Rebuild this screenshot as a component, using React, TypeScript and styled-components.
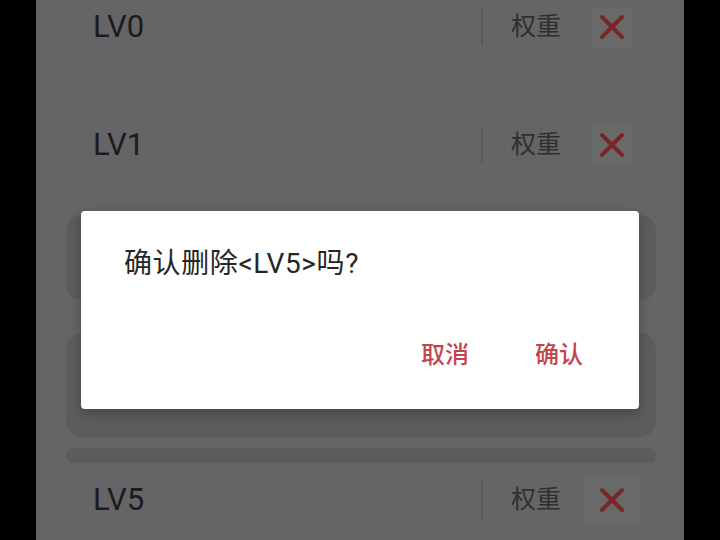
import React from "react";
import styled, { createGlobalStyle } from "styled-components";

const GlobalStyle = createGlobalStyle`
  html, body {
    margin: 0;
    padding: 0;
    background: #000;
  }
  body {
    font-family: Roboto, "Noto Sans CJK SC", "Noto Sans", sans-serif;
  }
`;

const Screen = styled.div`
  position: relative;
  width: 648px;
  height: 540px;
  margin: 0 auto;
  background: #656467;
  overflow: hidden;
`;

const List = styled.div`
  display: flex;
  flex-direction: column;
`;

const Row = styled.div<{ $top: number }>`
  display: flex;
  align-items: center;
  height: 54px;
  margin-top: ${(p) => p.$top}px;
  padding-left: 57px;
`;

const Label = styled.div`
  flex: 1;
  font-size: 31px;
  line-height: 54px;
  color: #1c1c1c;
`;

const Divider = styled.div<{ $h: number }>`
  width: 2px;
  height: ${(p) => p.$h}px;
  background: #5a5a5a;
`;

const Weight = styled.div`
  margin-left: 28px;
  margin-bottom: 1px;
  font-size: 25px;
  line-height: 30px;
  color: #2f2f2f;
  width: 70px;
`;

const XSlot = styled.div`
  width: 58px;
  margin-left: 2px;
  margin-right: 43px;
  display: flex;
  justify-content: center;
  align-items: center;
`;

const XButton = styled.div<{ $w: number; $h: number }>`
  width: ${(p) => p.$w}px;
  height: ${(p) => p.$h}px;
  background: #686a67;
  display: flex;
  align-items: center;
  justify-content: center;
`;

const Ghost = styled.div<{ $top: number; $h: number }>`
  margin-top: ${(p) => p.$top}px;
  margin-left: 30px;
  width: 590px;
  height: ${(p) => p.$h}px;
  background: #5c5d5a;
  border-radius: 16px;
`;

const Dialog = styled.div`
  position: absolute;
  left: 45px;
  top: 211px;
  width: 558px;
  height: 198px;
  box-sizing: border-box;
  background: #fff;
  border-radius: 4px;
  box-shadow: 0 4px 12px rgba(0, 0, 0, 0.25);
  display: flex;
  flex-direction: column;
  padding: 36px 56px 38px 43px;
`;

const Message = styled.div`
  font-size: 28px;
  line-height: 34px;
  letter-spacing: 0.6px;
  color: #262626;
`;

const Actions = styled.div`
  margin-top: auto;
  display: flex;
  justify-content: flex-end;
  gap: 66px;
`;

const ActionButton = styled.div`
  font-size: 24px;
  line-height: 32px;
  font-weight: 500;
  color: #c2454d;
`;

const CloseIcon = () => (
  <svg width="26" height="26" viewBox="0 0 26 26">
    <path
      d="M3 3 L23 23 M23 3 L3 23"
      stroke="#7a2529"
      strokeWidth="4"
      strokeLinecap="round"
    />
  </svg>
);

type ItemProps = { label: string; top: number; bw: number; bh: number; dh: number };

const Item = ({ label, top, bw, bh, dh }: ItemProps) => (
  <Row $top={top}>
    <Label>{label}</Label>
    <Divider $h={dh} />
    <Weight>权重</Weight>
    <XSlot>
      <XButton $w={bw} $h={bh}>
        <CloseIcon />
      </XButton>
    </XSlot>
  </Row>
);

export default function App() {
  return (
    <>
      <GlobalStyle />
      <Screen>
        <List>
          <Item label="LV0" top={0} bw={40} bh={40} dh={36} />
          <Item label="LV1" top={64} bw={40} bh={40} dh={36} />
          <Ghost $top={43} $h={85} />
          <Ghost $top={33} $h={104} />
          <Ghost $top={11} $h={15} />
          <Item label="LV5" top={10} bw={57} bh={52} dh={38} />
        </List>
        <Dialog>
          <Message>确认删除&lt;LV5&gt;吗?</Message>
          <Actions>
            <ActionButton>取消</ActionButton>
            <ActionButton>确认</ActionButton>
          </Actions>
        </Dialog>
      </Screen>
    </>
  );
}
